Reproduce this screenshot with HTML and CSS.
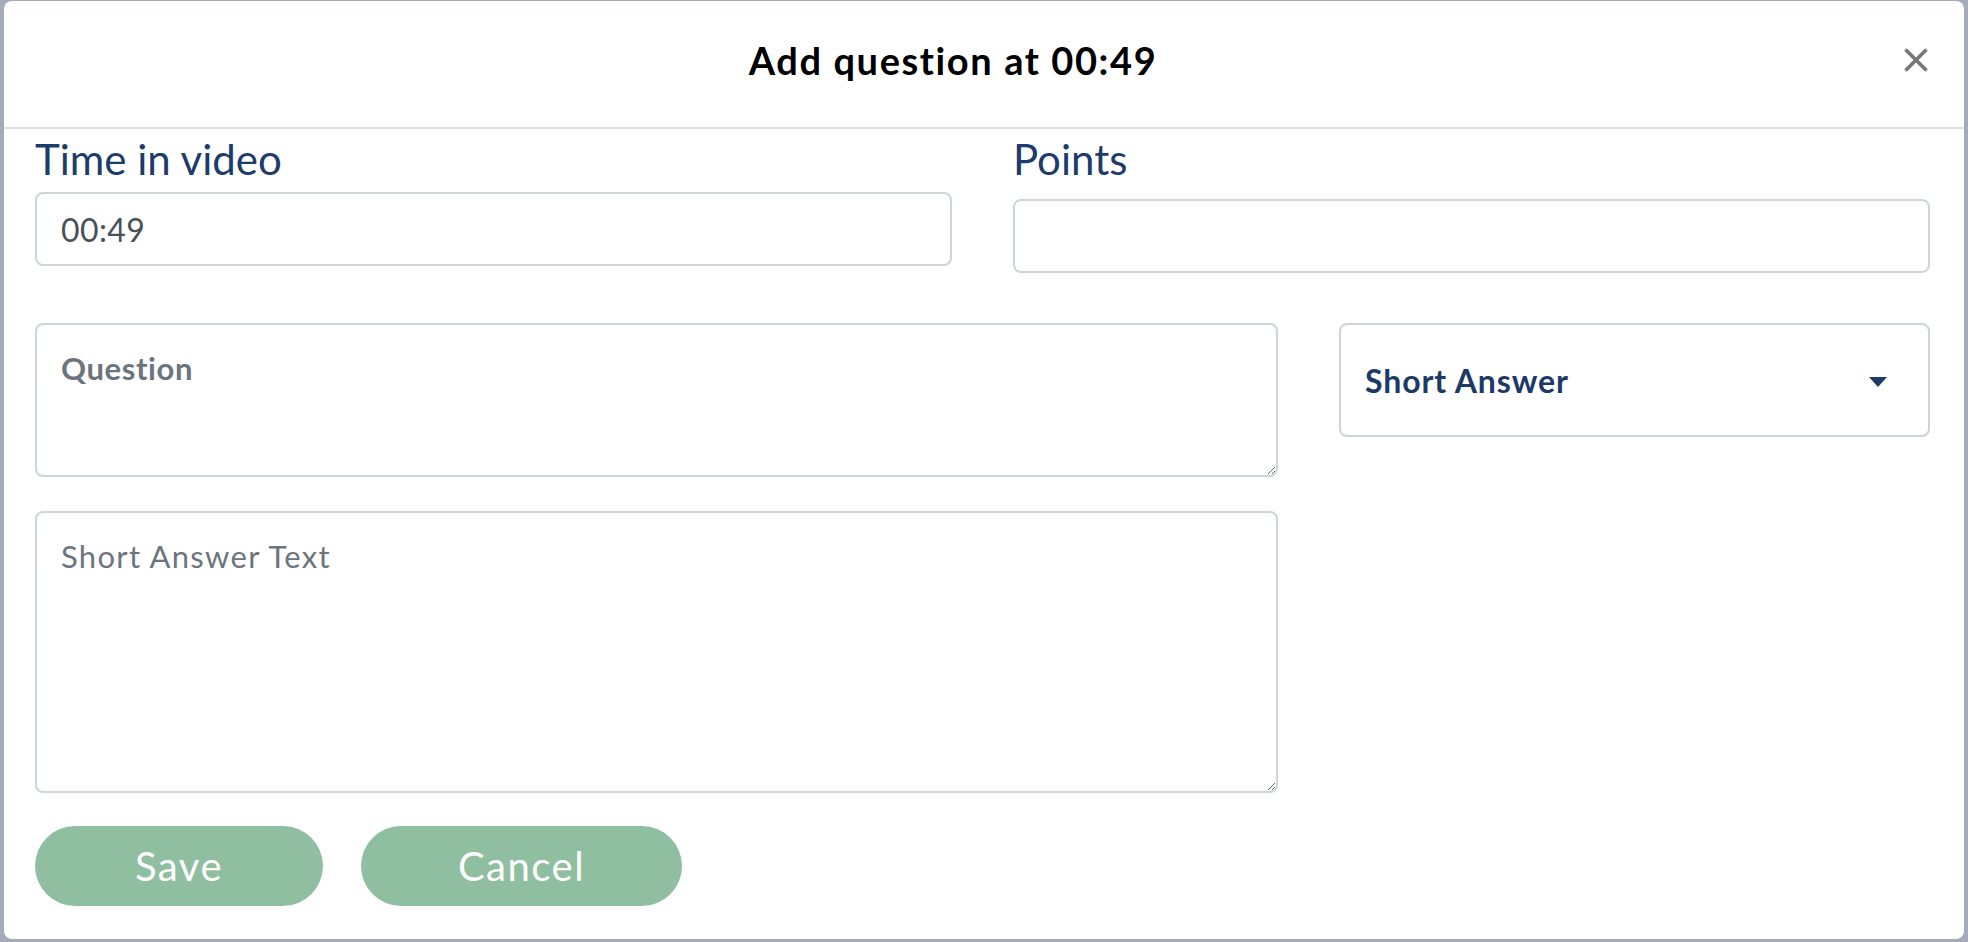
FILE: index.html
```html
<!DOCTYPE html>
<html lang="en">
<head>
<meta charset="utf-8">
<title>Add question</title>
<link rel="stylesheet" href="styles.css">
</head>
<body>
<div class="modal">
  <div class="modal-header">
    <h1 class="modal-title">Add question at 00:49</h1>
    <button class="close-btn" type="button" aria-label="Close">
      <svg width="24" height="24" viewBox="0 0 24 24"><path d="M1.5 1.5 L22.5 22.5 M22.5 1.5 L1.5 22.5" stroke="#777777" stroke-width="3.6" stroke-linecap="butt" fill="none"/></svg>
    </button>
  </div>
  <div class="modal-body">
    <div class="row">
      <div class="col col-6">
        <label class="field-label">Time in video</label>
        <input class="text-input" type="text" value="00:49">
      </div>
      <div class="col col-6">
        <label class="field-label">Points</label>
        <input class="text-input text-input--lower" type="text" value="">
      </div>
    </div>
    <div class="row row--question">
      <div class="col col-8">
        <textarea class="text-area text-area--question" placeholder="Question"></textarea>
        <textarea class="text-area text-area--answer" placeholder="Short Answer Text"></textarea>
      </div>
      <div class="col col-4">
        <div class="select-box">
          <span class="select-value">Short Answer</span>
          <span class="select-caret"></span>
        </div>
      </div>
    </div>
    <div class="row">
      <div class="col col-12 actions">
        <button class="pill-btn pill-btn--save" type="button">Save</button>
        <button class="pill-btn pill-btn--cancel" type="button">Cancel</button>
      </div>
    </div>
  </div>
</div>
</body>
</html>
```

FILE: styles.css
```css
* {
  box-sizing: border-box;
}

html, body {
  margin: 0;
  padding: 0;
  height: 942px;
  overflow: hidden;
}

body {
  background: #a3acb8;
  padding: 1px 0 0 4px;
  font-family: "Lato", "Noto Sans", sans-serif;
}

.modal {
  width: 1960px;
  height: 938px;
  background: #ffffff;
  border-radius: 8px;
  overflow: hidden;
}

.modal-header {
  display: flex;
  align-items: center;
  height: 128px;
  border-bottom: 2px solid #dee2e6;
  padding: 0 34px 8px 0;
}

.modal-title {
  flex: 1;
  margin: 0;
  text-align: center;
  font-size: 38px;
  font-weight: 700;
  letter-spacing: 1.6px;
  line-height: 44px;
  color: #000000;
}

.close-btn {
  width: 28px;
  height: 28px;
  padding: 0;
  border: none;
  background: transparent;
  display: flex;
  align-items: center;
  justify-content: center;
}

.modal-body {
  padding: 0 4px 0 0;
}

.row {
  display: flex;
  width: 1956px;
}

.col {
  padding: 0 30px 0 31px;
}

.col-6 { width: 50%; }
.col-8 { width: 66.6667%; }
.col-4 { width: 33.3333%; }
.col-12 { width: 100%; }

.field-label {
  display: block;
  margin-top: 5px;
  font-size: 42px;
  line-height: 50px;
  color: #1d3c6b;
}

.text-input {
  display: block;
  width: 100%;
  height: 74px;
  margin-top: 8px;
  padding: 0 24px;
  border: 2px solid #ced4da;
  border-radius: 8px;
  font-family: "Lato", "Noto Sans", sans-serif;
  font-size: 32px;
  letter-spacing: 0.4px;
  color: #495057;
  background: #ffffff;
  outline: none;
}

.text-input--lower {
  margin-top: 15px;
}

.row--question {
  margin-top: 50px;
}

.text-area {
  display: block;
  width: 100%;
  padding: 25px 24px;
  border: 2px solid #ced4da;
  border-radius: 8px;
  font-family: "Lato", "Noto Sans", sans-serif;
  font-size: 31px;
  letter-spacing: 1.3px;
  line-height: 36px;
  color: #495057;
  resize: vertical;
  outline: none;
}

.text-area::placeholder {
  color: #6c757d;
  opacity: 1;
}

.text-area--question {
  height: 154px;
}

.text-area--question::placeholder {
  font-weight: 700;
  letter-spacing: 0.6px;
}

.text-area--answer {
  height: 282px;
  margin-top: 34px;
}

.select-box {
  display: flex;
  align-items: center;
  justify-content: space-between;
  height: 114px;
  padding: 0 41px 0 24px;
  border: 2px solid #ced4da;
  border-radius: 8px;
}

.select-value {
  font-size: 32px;
  font-weight: 700;
  letter-spacing: 0.9px;
  color: #1d3a66;
}

.select-caret {
  width: 0;
  height: 0;
  border-left: 9px solid transparent;
  border-right: 9px solid transparent;
  border-top: 10px solid #1d3a66;
  margin-top: 4px;
}

.actions {
  display: flex;
  gap: 38px;
  margin-top: 33px;
}

.pill-btn {
  height: 80px;
  border: none;
  border-radius: 40px;
  background: #8fbfa0;
  color: #ffffff;
  font-family: "Lato", "Noto Sans", sans-serif;
  font-size: 40px;
  letter-spacing: 1.5px;
  padding: 0;
}

.pill-btn--save {
  width: 288px;
}

.pill-btn--cancel {
  width: 321px;
}
```
